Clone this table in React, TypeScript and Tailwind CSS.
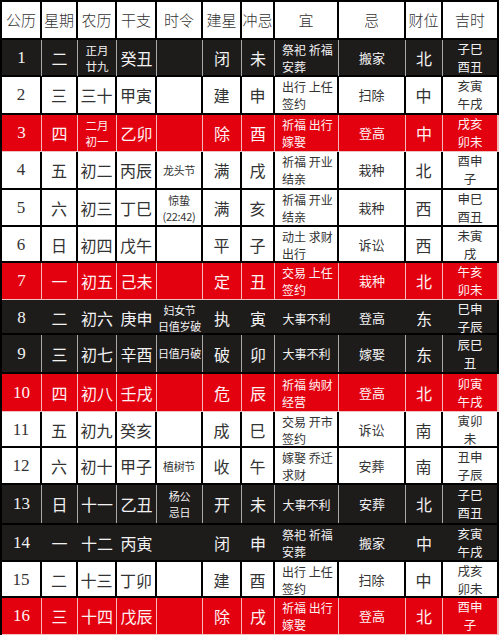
import React from 'react';

type Kind = 'white' | 'black' | 'red';

type Row = {
  day: string;
  week: string;
  lunar: string[];
  ganzhi: string;
  season: string[];
  star: string;
  clash: string;
  yi: string[];
  ji: string;
  pos: string;
  hours: string[];
  kind: Kind;
  plain?: boolean;
  h?: number;
};

const rows: Row[] = [
  { day: '1', week: '二', lunar: ['正月', '廿九'], ganzhi: '癸丑', season: [], star: '闭', clash: '未', yi: ['祭祀 祈福', '安葬'], ji: '搬家', pos: '北', hours: ['子巳', '酉丑'], kind: 'black' },
  { day: '2', week: '三', lunar: ['三十'], ganzhi: '甲寅', season: [], star: '建', clash: '申', yi: ['出行 上任', '签约'], ji: '扫除', pos: '中', hours: ['亥寅', '午戌'], kind: 'white', h: 38 },
  { day: '3', week: '四', lunar: ['二月', '初一'], ganzhi: '乙卯', season: [], star: '除', clash: '酉', yi: ['祈福 出行', '嫁娶'], ji: '登高', pos: '中', hours: ['戌亥', '卯未'], kind: 'red' },
  { day: '4', week: '五', lunar: ['初二'], ganzhi: '丙辰', season: ['龙头节'], star: '满', clash: '戌', yi: ['祈福 开业', '结亲'], ji: '栽种', pos: '北', hours: ['酉申', '子'], kind: 'white', h: 38 },
  { day: '5', week: '六', lunar: ['初三'], ganzhi: '丁巳', season: ['惊蛰', '(22:42)'], star: '满', clash: '亥', yi: ['祈福 开业', '结亲'], ji: '栽种', pos: '西', hours: ['申巳', '酉丑'], kind: 'white' },
  { day: '6', week: '日', lunar: ['初四'], ganzhi: '戊午', season: [], star: '平', clash: '子', yi: ['动土 求财', '出行'], ji: '诉讼', pos: '西', hours: ['未寅', '戌'], kind: 'white', h: 36 },
  { day: '7', week: '一', lunar: ['初五'], ganzhi: '己未', season: [], star: '定', clash: '丑', yi: ['交易 上任', '签约'], ji: '栽种', pos: '北', hours: ['午亥', '卯未'], kind: 'red' },
  { day: '8', week: '二', lunar: ['初六'], ganzhi: '庚申', season: ['妇女节', '日值岁破'], star: '执', clash: '寅', yi: ['大事不利'], ji: '登高', pos: '东', hours: ['巳申', '子辰'], kind: 'black', plain: true, h: 35 },
  { day: '9', week: '三', lunar: ['初七'], ganzhi: '辛酉', season: ['日值月破'], star: '破', clash: '卯', yi: ['大事不利'], ji: '嫁娶', pos: '东', hours: ['辰巳', '丑'], kind: 'black', h: 39 },
  { day: '10', week: '四', lunar: ['初八'], ganzhi: '壬戌', season: [], star: '危', clash: '辰', yi: ['祈福 纳财', '经营'], ji: '登高', pos: '北', hours: ['卯寅', '午戌'], kind: 'red', h: 38 },
  { day: '11', week: '五', lunar: ['初九'], ganzhi: '癸亥', season: [], star: '成', clash: '巳', yi: ['交易 开市', '签约'], ji: '诉讼', pos: '南', hours: ['寅卯', '未'], kind: 'white', h: 36 },
  { day: '12', week: '六', lunar: ['初十'], ganzhi: '甲子', season: ['植树节'], star: '收', clash: '午', yi: ['嫁娶 乔迁', '求财'], ji: '安葬', pos: '南', hours: ['丑申', '子辰'], kind: 'white' },
  { day: '13', week: '日', lunar: ['十一'], ganzhi: '乙丑', season: ['杨公', '忌日'], star: '开', clash: '未', yi: ['大事不利'], ji: '安葬', pos: '北', hours: ['子巳', '酉丑'], kind: 'black', h: 40 },
  { day: '14', week: '一', lunar: ['十二'], ganzhi: '丙寅', season: [], star: '闭', clash: '申', yi: ['祭祀 祈福', '安葬'], ji: '搬家', pos: '中', hours: ['亥寅', '午戌'], kind: 'black', plain: true },
  { day: '15', week: '二', lunar: ['十三'], ganzhi: '丁卯', season: [], star: '建', clash: '酉', yi: ['出行 上任', '签约'], ji: '扫除', pos: '中', hours: ['戌亥', '卯未'], kind: 'white', h: 36 },
  { day: '16', week: '三', lunar: ['十四'], ganzhi: '戊辰', season: [], star: '除', clash: '戌', yi: ['祈福 出行', '嫁娶'], ji: '登高', pos: '北', hours: ['酉申', '子'], kind: 'red' },
];

const headers = ['公历', '星期', '农历', '干支', '时令', '建星', '冲忌', '宜', '忌', '财位', '吉时'];

const GRID = 'grid grid-cols-[40px_36px_39px_40px_46px_39px_33px_64px_67px_37px_56px]';

const rowStyle: Record<Kind, string> = {
  white: 'bg-white text-[#333] border-b-2 border-black',
  black: 'bg-[#1e1b1b] text-[#f2f2f2] border-b-2 border-black',
  red: 'bg-[#e3000f] text-[#fff2f2] border-b border-[#f1c2c2]',
};

const cellLine: Record<Kind, string> = {
  white: 'border-r-2 border-black',
  black: 'border-r border-[#a9a9a9]',
  red: 'border-r border-[#f3b8b8]',
};

const heights: Record<number, string> = {
  35: 'h-[35px]',
  36: 'h-[36px]',
  37: 'h-[37px]',
  38: 'h-[38px]',
  39: 'h-[39px]',
  40: 'h-[40px]',
};

function Lines({ items, className }: { items: string[]; className: string }) {
  return (
    <div className={className}>
      {items.map((t, i) => <div key={i}>{t}</div>)}
    </div>
  );
}

export default function App() {
  return (
    <div className="w-[500px] h-[637px] bg-white font-['Noto_Sans_CJK_SC',sans-serif]">
      <div className="w-[499px] border-l-2 border-t-2 border-black">
        <div className={`${GRID} h-[38px] bg-white text-[#333] border-b-2 border-black`}>
          {headers.map((h, i) => (
            <div key={i} className="flex items-center justify-center text-[15px] font-light border-r-2 border-black">
              {h}
            </div>
          ))}
        </div>

        {rows.map((r) => {
          const line = r.plain ? 'border-r border-transparent' : cellLine[r.kind];
          const c = `flex items-center justify-center ${line}`;
          return (
            <div key={r.day} className={`${GRID} ${rowStyle[r.kind]} ${heights[r.h ?? 37]}`}>
              <div className={`${c} font-['Liberation_Serif',serif] text-[17px]`}>{r.day}</div>
              <div className={`${c} text-[16px]`}>{r.week}</div>
              <div className={c}>
                <Lines items={r.lunar} className={r.lunar.length > 1 ? 'text-[11.5px] leading-[16px] text-center' : 'text-[16px]'} />
              </div>
              <div className={`${c} text-[16px]`}>{r.ganzhi}</div>
              <div className={c}>
                <Lines
                  items={r.season}
                  className={r.season.length > 1 ? 'text-[11px] leading-[16px] text-center tracking-[-0.3px] whitespace-nowrap' : 'text-[11px] text-center tracking-[-0.3px] whitespace-nowrap'}
                />
              </div>
              <div className={`${c} text-[16px]`}>{r.star}</div>
              <div className={`${c} text-[16px]`}>{r.clash}</div>
              <div className={`${line} flex items-center ${r.yi.length > 1 ? 'pl-[7px]' : 'justify-center'}`}>
                <Lines items={r.yi} className="text-[12px] leading-[17px] whitespace-nowrap" />
              </div>
              <div className={`${c} text-[13px]`}>{r.ji}</div>
              <div className={`${c} text-[16px]`}>{r.pos}</div>
              <div className={`flex items-center justify-center border-r-2 ${r.kind === 'red' ? 'border-[#f3b8b8]' : 'border-black'}`}>
                <Lines items={r.hours} className="text-[12.5px] leading-[18px] text-center" />
              </div>
            </div>
          );
        })}
      </div>
    </div>
  );
}
